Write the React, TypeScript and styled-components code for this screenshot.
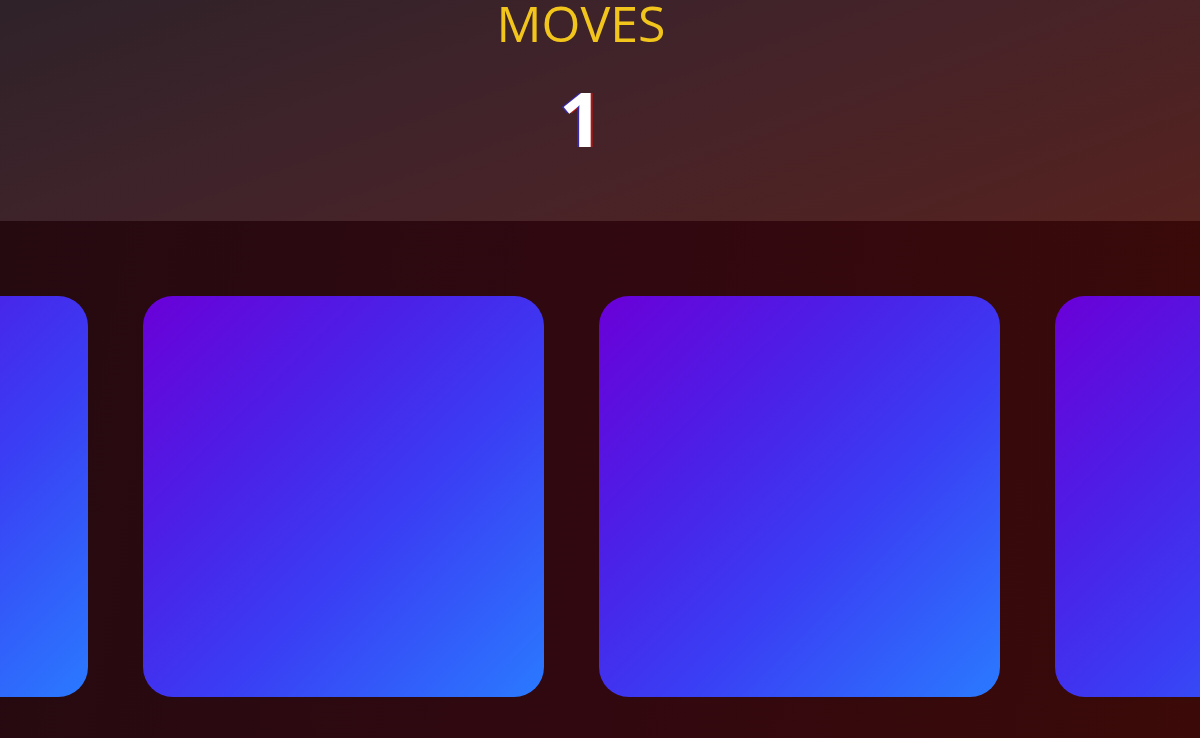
import styled, { createGlobalStyle } from "styled-components";

const GlobalStyle = createGlobalStyle`
  html, body {
    margin: 0;
    padding: 0;
    background: #2a0b0d;
    overflow: hidden;
  }
  * {
    box-sizing: border-box;
  }
`;

const App = () => {
  const cards = [0, 1, 2, 3];
  return (
    <Page>
      <GlobalStyle />
      <ScoreBar>
        <Label>MOVES</Label>
        <Count>1</Count>
      </ScoreBar>
      <Board>
        <Track>
          {cards.map((id) => (
            <Card key={id} />
          ))}
        </Track>
      </Board>
    </Page>
  );
};

const Page = styled.div`
  width: 1200px;
  height: 738px;
  display: flex;
  flex-direction: column;
  overflow: hidden;
  font-family: "Open Sans", "Noto Sans", sans-serif;
`;

const ScoreBar = styled.header`
  height: 221px;
  display: flex;
  flex-direction: column;
  align-items: center;
  padding-right: 38px;
  background: linear-gradient(160deg, #2f2229 0%, #42232a 45%, #55221f 100%);
`;

const Label = styled.div`
  font-size: 50px;
  line-height: 46px;
  color: #f2c51c;
`;

const Count = styled.div`
  margin-top: 32px;
  font-size: 76px;
  line-height: 80px;
  font-weight: 700;
  color: #fff;
  text-shadow: -2px 0 0 #3a2aa8, 2px 0 0 #b01818;
`;

const Board = styled.main`
  flex: 1;
  padding-top: 75px;
  background: linear-gradient(100deg, #250a10 0%, #310810 50%, #3b0a08 100%);
`;

const Track = styled.div`
  display: flex;
  gap: 55px;
  margin-left: -313px;
`;

const Card = styled.div`
  flex: 0 0 401px;
  height: 401px;
  border-radius: 30px;
  background: linear-gradient(135deg, #6a00d8 0%, #4a22e8 35%, #3a3ef4 60%, #2a7aff 100%);
`;

export default App;
